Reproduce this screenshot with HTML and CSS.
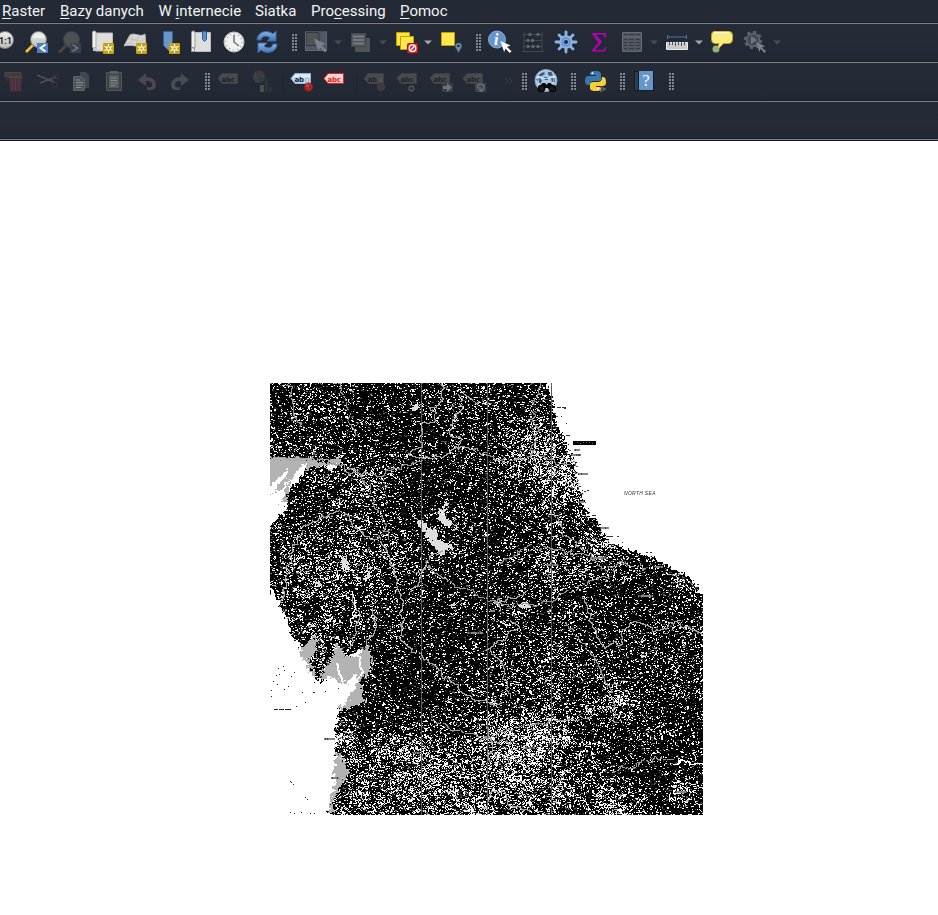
FILE: index.html
```html
<!DOCTYPE html>
<html lang="pl">
<head>
<meta charset="utf-8">
<title>QGIS</title>
<link rel="stylesheet" href="styles.css">
</head>
<body>
<svg class="defs" aria-hidden="true">
  <defs>
    <linearGradient id="lens" x1="0" y1="0" x2="0" y2="1"><stop offset="0" stop-color="#f0f0ee"/><stop offset="1" stop-color="#b9bbb8"/></linearGradient>
    <linearGradient id="blue" x1="0" y1="0" x2="0" y2="1"><stop offset="0" stop-color="#8db7e5"/><stop offset="1" stop-color="#3f73b5"/></linearGradient>
    <symbol id="star" viewBox="0 0 11 11"><rect width="11" height="11" rx="1" fill="#c6a00b"/><path d="M5.500 1v9M1.500 3.200l8 4.600M9.500 3.200l-8 4.600" stroke="#fff" stroke-width="1.100"/><circle cx="5.500" cy="5.500" r="2.300" fill="#fff"/><circle cx="5.500" cy="5.500" r="1.200" fill="#c6a00b"/></symbol>
    <symbol id="grip" viewBox="0 0 6 24"><path d="M2 4v17M5 4v17" stroke="#858890" stroke-width="2" stroke-dasharray="2 1"/></symbol>
    <symbol id="drop" viewBox="0 0 8 24"><path d="M0 10.500h8L4 14.500z" fill="currentColor"/></symbol>
    <symbol id="tag" viewBox="0 0 24 24"><path d="M1 9.500 5 4.500h15.500v10H5z" fill="#494b4d" stroke="#3c3f44"/></symbol>
    <symbol id="cursor" viewBox="0 0 12 13"><path d="M0 0l11 5-4 1.500 5 4.500-2 2-4.500-5L4 12z" fill="currentColor"/></symbol>
  </defs>
</svg>

<nav class="menu">
  <span><u>R</u>aster</span><span><u>B</u>azy danych</span><span>W <u>i</u>nternecie</span><span>Siatka</span><span>Pro<u>c</u>essing</span><span><u>P</u>omoc</span>
</nav>

<div class="bar bar-main">
  <svg class="icon" viewBox="0 0 24 24"><circle cx="5" cy="10" r="8.500" fill="url(#lens)" stroke="#777"/><text x="-1" y="13.500" class="ratio">1:1</text></svg>
  <svg class="icon" viewBox="0 0 24 24"><path d="M1 22.500 9 14.500" stroke="#342b20" stroke-width="4"/><path d="M1 22 8 15" stroke="#f3c13a" stroke-width="2.500"/><circle cx="13.500" cy="9.500" r="8" fill="url(#lens)" stroke="#777"/><path d="M7 8a7 5.500 0 0 1 13 0z" fill="#fff" opacity=".5"/><rect x="12" y="13" width="11" height="10" fill="#4b80bd"/><path d="m20.500 14.500-5 3.500 5 3.500" fill="none" stroke="#fff" stroke-width="2"/></svg>
  <svg class="icon" viewBox="0 0 24 24"><path d="M1 22.500 9 14.500" stroke="#494642" stroke-width="3"/><circle cx="13.500" cy="9.500" r="8" fill="#4c5055" stroke="#3d4147"/><rect x="12" y="13" width="11" height="10" fill="#374353"/><path d="m14.500 14.500 5 3.500-5 3.500" fill="none" stroke="#777d85" stroke-width="1.500"/></svg>
  <svg class="icon" viewBox="0 0 24 24"><path d="M4.500 3h17v18h-17z" fill="#dedfdd" stroke="#bbb"/><path d="M1.500 2.500c0-2 3.500-2 3.500 0v15H1.500z" fill="#f0f0ef" stroke="#aaa"/><path d="M2 17.500h4V21H2z" fill="#c4c5c4"/><use href="#star" x="12" y="13" width="11" height="11"/></svg>
  <svg class="icon" viewBox="0 0 24 24"><path d="M6 5c5-3 10 3 15-1l1 12c-7 3-14-3-22 0z" fill="#dadbd8" stroke="#bbb"/><path d="M3 10c7-3 12 3 19-1M2 14c6-3 14 3 20-1M9 5 5 16M14 6l-2 11M18 7l1 10M5 7l15 8M3 14 16 7" stroke="#bbb" fill="none" stroke-width=".6"/><use href="#star" x="12" y="13" width="11" height="11"/></svg>
  <svg class="icon" viewBox="0 0 24 24"><path d="M6.500 1.500h9v16l-4 3-5-5z" fill="#6796c9" stroke="#37628f"/><use href="#star" x="12" y="13" width="11" height="11"/></svg>
  <svg class="icon" viewBox="0 0 24 24"><path d="M4.500 2.500h16v19h-16z" fill="#dededc" stroke="#bbb"/><path d="M1.500 2.500c0-2 3.500-2 3.500 0v15H1.500zM1.500 18h3v3.500h-3z" fill="#eee" stroke="#999"/><path d="M12.500 1.500h4v8l-2 2-2-2z" fill="#5b92d0" stroke="#28609a"/></svg>
  <svg class="icon" viewBox="0 0 24 24"><circle cx="12" cy="12" r="10" fill="#f1f2ed" stroke="#b9c3c9"/><circle cx="12" cy="12" r="8" fill="none" stroke="#8199aa" stroke-width="1.200" stroke-dasharray="1 3.190"/><path d="M12 5v7l5 4" fill="none" stroke="#68727b" stroke-width="1.500"/></svg>
  <svg class="icon" viewBox="0 0 24 24"><path d="M2 10C2 2 12-1 18 4l3-3v10h-9l3-3C11 5 7 6 6 10z" fill="url(#blue)" stroke="#3c6aa4"/><path d="M22 14c0 8-10 11-16 6l-3 3V13h9l-3 3c4 3 8 2 9-2z" fill="url(#blue)" stroke="#3c6aa4"/></svg>
  <svg class="grip"><use href="#grip"/></svg>
  <svg class="icon" viewBox="0 0 24 24"><path d="M2 2h22v19H2z" fill="#505865"/><path d="M3 2.500h13v13H3z" fill="#505453" stroke="#35393e"/><path d="M2.500 1.500h21v19h-21z" fill="none" stroke="#727782" stroke-dasharray="1 1"/><g class="pale"><use href="#cursor" x="11" y="8" width="13" height="15"/></g></svg>
  <svg class="drop off"><use href="#drop"/></svg>
  <svg class="icon" viewBox="0 0 24 24"><path d="M5 8h15v14H5z" fill="#515550"/><path d="M1.500 3.500h14v13h-14z" fill="#53585f" stroke="#43484f"/><path d="M3 6.500h11M3 10h11M3 13.500h11" stroke="#7b8087" stroke-width="1.500"/></svg>
  <svg class="drop off"><use href="#drop"/></svg>
  <svg class="icon" viewBox="0 0 24 24"><path d="M2.500 2.500h13v13h-13z" fill="#fee740" stroke="#c79d06"/><path d="M6.500 6.500h13v13h-13z" fill="#fee94c" stroke="#c79d06"/><rect x="13.500" y="13.500" width="10" height="9.500" rx="1" fill="#d82d31" stroke="#b20d14"/><circle cx="18.500" cy="18.200" r="3.300" fill="none" stroke="#fff" stroke-width="1.300"/><path d="m16.500 20.200 4-4" stroke="#fff" stroke-width="1.300"/></svg>
  <svg class="drop on"><use href="#drop"/></svg>
  <svg class="icon" viewBox="0 0 24 24"><path d="M1.500 2.500h13v13h-13z" fill="#fee94c" stroke="#c79d06"/><path d="M18.500 22.500c-1-3-3-4-3-6.500a3 3 0 0 1 6 0c0 2.500-2 3.500-3 6.500z" fill="#6f95ad" stroke="#486b84"/><circle cx="18.500" cy="16" r="1.300" fill="#222936"/></svg>
  <svg class="grip"><use href="#grip"/></svg>
  <svg class="icon" viewBox="0 0 24 24"><circle cx="9" cy="9.500" r="8.500" fill="#6494cb" stroke="#8aaed9"/><text x="6" y="15" class="info">i</text><g class="white"><use href="#cursor" x="12" y="11" width="12" height="12"/></g></svg>
  <svg class="icon" viewBox="0 0 24 24"><path d="M3 2v19M21 2v19M2 4.500h20M2 10.500h20M2 16.500h20M1 21.500h22" stroke="#42464e"/><g fill="#62656c"><circle cx="9" cy="4.500" r="1.700"/><circle cx="17" cy="4.500" r="1.700"/><circle cx="7" cy="10.500" r="1.700"/><circle cx="11.500" cy="10.500" r="1.700"/><circle cx="7" cy="16.500" r="1.700"/><circle cx="12" cy="16.500" r="1.700"/><circle cx="17" cy="16.500" r="1.700"/></g></svg>
  <svg class="icon" viewBox="0 0 24 24"><path d="M12 2v20M2 12h20M5 5l14 14M19 5 5 19" stroke="#8bb5e8" stroke-width="2.800" stroke-linecap="round"/><circle cx="12" cy="12" r="6" fill="#7da8dc" stroke="#8bb5e8" stroke-width="1.500"/><circle cx="12" cy="12" r="4" fill="none" stroke="#5c89c1"/><circle cx="12" cy="12" r="2" fill="#222b38"/></svg>
  <svg class="icon" viewBox="0 0 24 24"><path d="M5 3h14v5h-1l-2-3.500H9l6 7.500-7 8h8.500l2-3.500h1L18 21.500H5V20l6.500-7.500L5 4z" fill="#b500af"/></svg>
  <svg class="icon" viewBox="0 0 24 24"><path d="M2.500 2.500h19v19h-19z" fill="#505560" stroke="#656a75"/><path d="M4 4.500h3M9 4.500h5M16 4.500h4M4 9.500h3M9 9.500h5M16 9.500h4M4 12.500h3M9 12.500h5M16 12.500h4M4 15.500h3M9 15.500h5M16 15.500h4M4 18.500h3M9 18.500h5M16 18.500h4" stroke="#343945"/><path d="M3 7h18" stroke="#6c717a"/></svg>
  <svg class="drop off"><use href="#drop"/></svg>
  <svg class="icon" viewBox="0 0 24 24"><path d="M2.500 5v4M21.500 5v4M2 7h20" stroke="#4f78a4"/><path d="M1.500 12.500h21v7h-21z" fill="#cbc9ca" stroke="#eeeced"/><path d="M4.500 12v3M7.500 12v3M10.500 12v4M13.500 12v3M16.500 12v4M19.500 12v3" stroke="#555"/></svg>
  <svg class="drop on"><use href="#drop"/></svg>
  <svg class="icon" viewBox="0 0 24 24"><circle cx="6" cy="19" r="3.500" fill="#85b78a"/><path d="M4 1.500h15q3.500 0 3.500 4v4q0 4-4 4h-5L7 20l2-6.500H5q-3.500 0-3.500-4v-4q0-4 2.500-4z" fill="#fbec81" stroke="#c8a313"/><path d="M4 2.500h15" stroke="#fffbd8" stroke-width="1.500"/></svg>
  <svg class="icon" viewBox="0 0 24 24"><circle cx="10" cy="10" r="8" fill="none" stroke="#5b606a" stroke-width="2.500" stroke-dasharray="3.200 3.080"/><circle cx="10" cy="10" r="6.500" fill="#434852" stroke="#626771" stroke-width="1.500"/><path d="m8 6 6 4-6 4z" fill="#717680"/><g class="pale"><use href="#cursor" x="13" y="12" width="10" height="11"/></g></svg>
  <svg class="drop off"><use href="#drop"/></svg>
</div>

<div class="bar bar-edit">
  <svg class="icon" viewBox="0 0 24 24"><path d="M3 3.500h16v4H3z" fill="#3c3e3d" stroke="#484846"/><path d="M5 12V5.500h15" fill="none" stroke="#4d343c"/><path d="M7 9h13l-1 13.500H8z" fill="#49313a"/><path d="M6 8.500h15M10 10v11M13.500 10v11M17 10v11" stroke="#5d3c46"/></svg>
  <svg class="icon" viewBox="0 0 24 24"><path d="M0 6 17 13M3 14l16-6" stroke="#4c5057" stroke-width="1.800"/><ellipse cx="19" cy="7.500" rx="3" ry="2" fill="none" stroke="#423138"/><ellipse cx="18" cy="16" rx="2.200" ry="3" fill="none" stroke="#423138"/></svg>
  <svg class="icon" viewBox="0 0 24 24"><path d="M10 3h6l3 3v13h-9z" fill="#43484f"/><path d="M3.500 7.500h8l3 3v11h-11z" fill="#50555b" stroke="#5e6368"/><path d="M6 11h4M6 13.500h7M6 16h7M6 18.500h5" stroke="#898d90"/></svg>
  <svg class="icon" viewBox="0 0 24 24"><path d="M3.500 3.500h15v18h-15z" fill="#3d4146" stroke="#555959"/><path d="M6 6h10v13H6z" fill="#575c61"/><path d="M7 2h8v3H7z" fill="#5c6062"/><path d="M7.500 9h6M7.500 11.500h7M7.500 14h7M7.500 16.500h5" stroke="#84878a"/></svg>
  <svg class="icon" viewBox="0 0 24 24"><path d="m2 11 8-7v4c7 0 10 4 10 8 0 3-2 5-6 5h-3v-3c3 1 5 0 5-2 0-3-2-4-6-4v5z" fill="#4e474d"/></svg>
  <svg class="icon" viewBox="0 0 24 24"><path d="m20 11-8-7v4C5 8 2 12 2 16c0 3 2 5 6 5h3v-3c-3 1-5 0-5-2 0-3 2-4 6-4v5z" fill="#434f54"/></svg>
  <svg class="grip"><use href="#grip"/></svg>
  <svg class="icon" viewBox="0 0 24 24"><use href="#tag"/><text x="4.500" y="12.500" class="label">abc</text></svg>
  <svg class="icon" viewBox="0 0 24 24"><circle cx="9" cy="8" r="6" fill="#3a4243"/><path d="M9 8 4 4a6 6 0 0 1 10 0z" fill="#42383e"/><path d="M9 8v6a6 6 0 0 0 6-6z" fill="#2a3e3c"/><path d="M10 16h4v7h-4z" fill="#4d4e4c"/><path d="M15 11h2.500v12H15z" fill="#293b39"/><path d="M19 18h2.500v5H19z" fill="#3e3036"/></svg>
  <i class="sep"></i>
  <svg class="icon" viewBox="0 0 24 24"><path d="M1 9.500 5 4.500h15.500v10H5z" fill="#bdd8f8" stroke="#8db8ea"/><path d="M5 5.500h15v3H3z" fill="#eef6ff" opacity=".7"/><text x="4.500" y="12.500" class="label">ab</text><path d="M16 15V9.500q1.500-2 2.500 0v6" fill="#ddd" stroke="#999" stroke-width=".7"/><circle cx="18.500" cy="18" r="4.400" fill="#a82628"/><circle cx="17.500" cy="16.500" r="1.500" fill="#cc4a47"/></svg>
  <svg class="icon" viewBox="0 0 24 24"><path d="M1 9.500 5 4.500h15.500v10H5z" fill="#fbd5d5" stroke="#f11b1e"/><text x="4.500" y="12.500" class="label red">abc</text></svg>
  <i class="sep"></i>
  <svg class="icon" viewBox="0 0 24 24"><use href="#tag"/><text x="4.500" y="12.500" class="label">ab</text><path d="M16.500 15V9.500h2v6" fill="#555"/><circle cx="18" cy="18" r="4.400" fill="#40393f"/></svg>
  <svg class="icon" viewBox="0 0 24 24"><use href="#tag"/><text x="4.500" y="12.500" class="label">abc</text><circle cx="15.500" cy="19.500" r="2.300" fill="#252c37" stroke="#4e535b" stroke-width="1.700"/></svg>
  <svg class="icon" viewBox="0 0 24 24"><use href="#tag"/><text x="4.500" y="12.500" class="label">abc</text><path d="M13 14h11v9H13z" fill="#393f4a"/><path d="M14 17h4v-3l5 4.500-5 4.500v-3h-4z" fill="#6f7379"/></svg>
  <svg class="icon" viewBox="0 0 24 24"><use href="#tag"/><text x="4.500" y="12.500" class="label">abc</text><path d="M13 14h11v9H13z" fill="#3d424c"/><path d="M16 20c-3-6 6-6 6-2 0 2-2 3-4 3M18 18v4h3" fill="none" stroke="#696d74" stroke-width="1.600"/></svg>
  <svg class="icon" viewBox="0 0 24 24"><path d="m3 9 3 3-3 3M7 9l3 3-3 3" fill="none" stroke="#383d47"/></svg>
  <svg class="grip"><use href="#grip"/></svg>
  <svg class="icon" viewBox="0 0 24 24"><circle cx="12" cy="11.500" r="11" fill="#a9c6e3" stroke="#8ba6c0"/><path d="M5 5l5-2 1 2-3 2-4 0zM14 3h4l2 3-4 1-2-1zM2 10l4-1 2 3-2 3zM17 9l4 0 0 4-3 0zM10 8l3 0 1 3-3 0z" fill="#365f87"/><path d="M2 8q10 3 20 0M6 3q-4 7 0 14M18 3q4 7 0 12" fill="none" stroke="#e3eef7" stroke-width=".8"/><path d="M8.500 14h2.500l1.500 2 1.500-2h2.500l6 6-6 2-3-3h-2l-3 3-5-2z" fill="#050505"/><circle cx="7.500" cy="19.500" r="3.200" fill="#151a1d" stroke="#050505" stroke-width="1.200"/><circle cx="18.500" cy="19.500" r="3.200" fill="#151a1d" stroke="#050505" stroke-width="1.200"/></svg>
  <svg class="grip"><use href="#grip"/></svg>
  <svg class="icon" viewBox="0 0 24 24"><path d="M11 2c5 0 6 1 6 4v4q0 2-3 2H9q-3 0-3 4H4c-2 0-3-2-3-4 0-3 1-5 4-5h7V6H6V4c0-1.500 2-2 5-2z" fill="#3978ad"/><path d="M12 22c-5 0-6-1-6-4v-2q0-3 3-3h5q4 0 4-5c3 0 4 1 4 5 0 3-1 4-4 4h-6v1h5v2c0 1.500-2 2-5 2z" fill="#f8cf39"/><circle cx="8.500" cy="4.200" r="1" fill="#fff"/><circle cx="14" cy="19.500" r="1" fill="#fff"/><path d="m16 18 5 2-5 2.500" fill="none" stroke="#666865" stroke-width="1.500"/></svg>
  <svg class="grip"><use href="#grip"/></svg>
  <svg class="icon" viewBox="0 0 24 24"><path d="M1 2h20v20H1z" fill="#171c23"/><path d="M2 3h3v18H2z" fill="#2c414f"/><path d="M6 2h14v19H6z" fill="#6597cc"/><text x="9.500" y="17" class="help">?</text></svg>
  <svg class="grip"><use href="#grip"/></svg>
</div>
<div class="bar bar-empty"></div>

<main class="view">
  <div class="map">
    <canvas id="map" width="433" height="432"></canvas>
    <span class="sea">NORTH SEA</span>
  </div>
</main>
<script src="map.js"></script>
</body>
</html>
```

FILE: styles.css
```css
body { margin: 0; height: 915px; overflow: hidden; display: flex; flex-direction: column; background: #fff; font-family: Roboto, sans-serif; }
.defs { position: absolute; width: 0; height: 0; }
.menu { box-sizing: border-box; height: 24px; flex: none; display: grid; grid-template-columns: 58px 98.500px 96.500px 56px 89px auto; padding-left: 2px; background: #232a35; border-bottom: 1px solid #7b7f87; box-shadow: inset 0 -1px #1a1e27; color: #f4f5f6; font-size: 15px; line-height: 22px; white-space: nowrap; }
.menu u { text-decoration-thickness: 1px; text-underline-offset: 2px; text-decoration-skip-ink: none; }
.bar { box-sizing: border-box; height: 39px; flex: none; display: grid; align-content: start; padding-top: 6px; background: linear-gradient(#252c38, #222833); border-bottom: 1px solid #7b7f87; box-shadow: inset 0 -1px #1a1e27; }
.bar-main { grid-template-columns: 25px 33px 33px 33px 33px 33px 32px 33px 36px 12px 31px 16px 29px 15px 30px 16px 35px 13px 33px 33px 33px 33px 30px 15px 30px 15px 33px 30px 8px; }
.bar-edit { grid-template-columns: 35px 33px 33px 33px 33px 35px 13px 33px 33px 7px 33px 33px 7px 33px 33px 33px 40px 19px 13px 36px 14px 35px 14px 35px 10px; padding-left: 2px; }
.bar-empty { height: 38px; }
.icon { width: 24px; height: 24px; display: block; }
.grip { width: 6px; height: 24px; display: block; }
.drop { width: 8px; height: 24px; display: block; }
.drop.off { color: #494e58; }
.pale { color: #7c818b; }
.on { color: #a4a6aa; }
.white { color: #fff; }
.sep { width: 1px; height: 18px; margin-top: 4px; background: #1e242d; }
.ratio { font: bold 9px Roboto, sans-serif; fill: #222; }
.info { font: italic bold 16px "Liberation Serif", serif; fill: #fff; }
.label { font: bold 7px "DejaVu Sans", sans-serif; letter-spacing: -.2px; fill: #20242b; }
.red { fill: #e51c20; }
.help { font: 16px "Liberation Serif", serif; fill: #fff; }
.view { flex: 1; border-top: 1px solid #15181e; background: #fff; }
.map { position: relative; width: 433px; height: 432px; margin: 242px 0 0 270px; }
.map canvas { display: block; }
.sea { position: absolute; left: 354px; top: 106px; font: italic 5px/9px "Liberation Sans", sans-serif; letter-spacing: .3px; color: #333; white-space: nowrap; }
```

FILE: map.js
```js
const ctx = document.getElementById('map').getContext('2d');
const W = 433, H = 432, OX = 270, OY = 383;
let seed = 7919;
const rnd = () => {
  seed = (seed + 0x6D2B79F5) | 0;
  let t = Math.imul(seed ^ (seed >>> 15), 1 | seed);
  t = (t + Math.imul(t ^ (t >>> 7), 61 | t)) ^ t;
  return ((t ^ (t >>> 14)) >>> 0) / 4294967296;
};
const px = (x, y, c, w = 1, h = 1) => { ctx.fillStyle = c; ctx.fillRect(Math.round(x) - OX, Math.round(y) - OY, w, h); };

// Smooth value noise, used to fray coasts and to clump the speckle.
const grid = Array.from({ length: 400 * 400 }, rnd);
const noise = (x, y, s) => {
  const u = x / s, v = y / s, i = Math.floor(u), j = Math.floor(v), f = u - i, g = v - j;
  const at = (a, b) => grid[(b % 400) * 400 + (a % 400)];
  return (at(i, j) * (1-f) + at(i+1, j) * f) * (1-g) + (at(i, j+1) * (1-f) + at(i+1, j+1) * f) * g;
};

// Even-odd containment test for [x, y] rings.
const inside = (p, x, y) => {
  let r = false;
  for (let i = 0, j = p.length - 1; i < p.length; j = i++) {
    const [a, b] = p[i], [c, d] = p[j];
    if ((b > y) !== (d > y) && x < (c - a) * (y - b) / (d - b) + a) r = !r;
  }
  return r;
};
const frayed = (p, x, y, j) => inside(p, x + (noise(x, y, 2) - .5) * j, y + (noise(y, x, 2) - .5) * j);
const area = (p, c, j = 6) => {
  for (let y = OY; y < OY + H; y++) for (let x = OX; x < OX + W; x++)
    if (frayed(p, x, y, j)) px(x, y, c);
};

const land = [[264,376],[546,376],[546,382],[549,392],[552,402],[554,412],[556,422],[561,432],[566,442],[571,452],[575,462],[576,474],[579,488],[583,502],[587,512],[596,520],[602,530],[609,540],[618,546],[628,550],[643,553],[656,559],[668,566],[678,572],[690,577],[697,588],[704,598],[709,598],[709,822],[334,822],[334,816],[328,812],[329,803],[335,785],[337,770],[335,755],[335,735],[337,710],[352,706],[365,702],[361,688],[357,682],[364,672],[372,663],[368,650],[360,648],[348,657],[338,654],[331,668],[322,682],[315,681],[308,667],[304,655],[297,643],[292,635],[288,624],[283,611],[277,598],[270,588],[264,586],[264,530],[269,528],[277,518],[286,510],[286,498],[290,487],[300,478],[292,470],[264,466]];
const hot = [[535,455,24,.2],[570,475,14,.25],[555,500,25,.1],[600,550,14,.25],[548,565,14,.15],[520,740,17,.24],[553,735,14,.28],[510,782,26,.15],[550,785,25,.12],[615,702,10,.32],[385,748,10,.3],[415,755,14,.2],[460,795,32,.2],[380,800,32,.15],[620,808,18,.22],[680,792,9,.25],[365,485,14,.15],[345,565,22,.14],[320,640,22,.1],[345,735,8,.35],[560,690,25,.07],[675,640,24,.05],[300,570,22,.08],[400,555,25,.04],[680,580,10,.22],[300,435,25,.04],[500,720,20,.08],[370,480,30,.05]];
const calm = [[400,425,28,.06],[405,500,25,.06],[510,515,20,.05],[650,590,30,.05],[410,690,30,.06],[650,790,22,.1],[500,800,12,.15],[440,620,40,.03]];
const sum = (a, x, y) => a.reduce((s, [u, v, r, k]) => s + k * Math.exp(-((x-u)**2 + (y-v)**2) / (2*r*r)), 0);

area(land, '#000');
for (let y = OY; y < OY + H; y++) for (let x = OX; x < OX + W; x++) {
  if (!frayed(land, x, y, 6)) continue;
  const clump = (.4 + 1.2 * noise(x, y, 6)) * (.5 + noise(y, x, 2.3));
  const d = Math.max(.04, .135 + sum(hot, x, y) - sum(calm, x, y)) * clump, r = rnd();
  if (r < d * .72) px(x, y, '#fff', rnd() < .3 ? 2 : 1, rnd() < .12 ? 2 : 1);
  else if (r < d) px(x, y, rnd() < .5 ? '#777' : '#c5c5c5', rnd() < .3 ? 2 : 1);
  else if (r < d + .065) px(x, y, rnd() < .7 ? '#292929' : '#555', rnd() < .4 ? 2 : 1);
}

// Tidal flats along the western coast.
[
  [[264,457],[310,458],[325,462],[335,457],[341,457],[334,467],[319,464],[302,471],[290,480],[286,500],[280,504],[284,489],[290,478],[278,490],[264,493]],
  [[300,645],[313,639],[316,630],[317,648],[308,658],[316,680],[311,674],[299,650]],
  [[331,657],[338,642],[345,657],[358,657],[367,646],[372,658],[371,668],[364,675],[359,681],[365,701],[352,706],[336,710],[348,699],[358,681],[353,673],[345,683],[339,682],[331,676],[319,678]],
  [[336,750],[346,763],[347,775],[341,784],[335,794],[331,805],[335,814],[327,809],[334,785],[334,772]]
].forEach(p => area(p, '#b3b3b3'));
[[[264,491],[277,479],[289,467],[286,474],[272,492]],[[303,463],[307,463],[303,473],[290,481],[296,471]],[[325,466],[337,463],[336,467],[327,468]]].forEach(p => area(p, '#fff', 3));

// Inland water.
[
  [[408,512],[415,519],[424,520],[430,529],[438,531],[438,539],[446,543],[455,542],[452,548],[444,549],[440,555],[436,550],[430,542],[423,532],[416,523]],
  [[443,502],[448,502],[443,514],[451,521],[461,527],[455,525],[440,524],[438,514]],
  [[467,524],[474,526],[472,531],[468,529]],
  [[343,552],[348,566],[346,573],[342,564]],[[367,564],[372,576],[365,577]],[[313,583],[322,581],[324,587],[315,585]],
  [[409,401],[418,407],[423,410],[414,410]],[[450,603],[457,606],[451,607]],[[521,603],[530,603],[528,608],[522,608]]
].forEach(p => area(p, '#dedede', 6));

// Draws a connected, wandering river or road through its control points.
const line = (pts, c, rough = 1.4, thick = 1, keep = .94) => {
  let lx = null, ly = null;
  for (let i = 1; i < pts.length; i++) {
    const [a, b] = pts[i-1], [u, v] = pts[i], n = Math.ceil(Math.hypot(u-a, v-b));
    for (let k = 0; k <= n; k++) {
      const x0 = a + (u-a)*k/n, y0 = b + (v-b)*k/n;
      const x = Math.round(x0 + (noise(x0, y0, 3.5) - .5) * rough * 4), y = Math.round(y0 + (noise(y0, x0, 3.5) - .5) * rough * 4);
      if (rnd() < keep) {
        px(x, y, c, thick, 1);
        if (lx !== null && lx !== x) px(Math.min(lx, x), y, c, Math.abs(lx - x) + 1, 1);
        if (ly !== null && ly !== y) px(lx, Math.min(ly, y), c, 1, Math.abs(ly - y) + 1);
      }
      lx = x; ly = y;
    }
  }
};
[421, 487, 551].forEach(x => { for (let y = OY; y < 815; y++) if (inside(land, x, y) || y < 404) px(x, y, rnd() < .8 ? '#555' : '#888'); });
[
  [[441,383],[443,398],[431,409],[436,419],[422,425],[419,436],[420,446],[408,455],[423,458],[445,454],[458,446],[474,448],[485,455]],
  [[459,392],[462,407],[452,418],[449,436],[461,439],[455,447]],
  [[462,390],[469,397],[480,402]],
  [[270,458],[310,459],[340,464]],
  [[402,600],[400,641],[415,652],[436,667],[448,680],[463,692],[481,702],[500,704]],
  [[300,528],[322,516],[342,511],[350,518],[352,528],[370,538],[381,539],[391,558],[396,581],[402,600]],
  [[301,530],[290,555],[284,583],[282,600]],
  [[490,650],[502,664],[505,682],[511,697]],[[487,648],[512,632],[520,627],[508,620]],
  [[582,597],[591,625],[601,646],[620,643],[625,626],[641,621],[657,631],[674,621],[692,630],[703,633]],
  [[498,610],[494,600],[512,598],[525,593]],
  [[487,726],[492,740],[487,760]],[[487,800],[492,792],[506,792],[510,806],[528,810]],
  [[352,595],[358,615],[350,650]],[[374,607],[376,625],[368,640],[365,648]]
].forEach(p => line(p, '#a9a9a9', 1.5));
[
  [[340,464],[360,475],[370,485],[371,499],[381,519],[390,541]],
  [[415,572],[430,567],[455,585],[480,595],[510,605],[545,603],[570,590],[610,575]],
  [[610,770],[635,765],[655,758],[674,762]],
  [[480,742],[508,728],[550,720],[590,718]],
  [[485,456],[505,462],[535,455],[569,465]],[[551,510],[565,535],[586,551],[605,570],[625,560],[645,570]],
  [[540,383],[530,410],[538,430],[530,455]],[[340,383],[348,410],[354,435]],[[288,383],[292,400],[300,428]],
  [[500,560],[530,545],[550,548],[585,556]],[[560,620],[590,650],[610,690],[615,720]],[[430,720],[470,735],[510,742]]
].forEach(p => line(p, '#999', 1.8, 1, .7));
line([[330,463],[342,464],[350,473],[378,475],[400,467],[421,460]], '#999');
line([[353,590],[355,604],[350,624]], '#fff', 1, 1);
line([[359,658],[362,671],[355,682]], '#fff', 1, 2);
line([[337,663],[341,677],[340,685]], '#fff', 1, 2);
line([[673,765],[682,760],[690,764],[703,764]], '#fff', .8, 2);
line([[443,550],[425,560],[420,580],[406,594]], '#aaa', 1.5, 1, .8);

// Place-name marks.
[[574,449,6],[571,454,10],[578,473,10],[600,527,9],[590,557,17],[546,564,13],[638,595,15],[467,632,16],[324,738,11],[331,777,8],[578,501,6],[656,566,7],[490,610,5],[525,747,10],[413,752,7],[675,791,12]].forEach(([x,y,w]) => {
  for (let i = 0; i < w; i++) px(x+i, y, rnd() < .8 ? '#888' : '#444', 1, 2);
});
px(573,441,'#000',23,4);
for (let i = 577; i < 594; i += 3) px(i, 442 + Math.round(rnd()), '#777');

// Coastal fragments and offshore soundings.
const dots = (list, c) => list.forEach(([x,y,w=1,h=1]) => px(x,y,c,w,h));
dots([[557,407,4],[562,407,4],[564,408,2],[552,400,2],[561,416],[558,435,6],[566,435,4],[566,423],[587,490,2],[585,502],[584,491,2],[592,515,4],[607,536,6],[617,536,2],[622,542],[646,552,2],[650,552,2],[693,580],[697,584,2]], '#333');
dots([[283,666],[284,670],[278,668],[276,675],[279,674],[273,681],[277,684],[271,690],[271,696],[284,689],[288,686],[291,676],[294,672],[302,692],[313,692,2],[305,702],[296,706],[325,691],[338,688],[274,709,4],[279,709,5],[285,709,6],[290,781],[291,782],[293,784],[305,797],[307,799],[290,812],[294,813],[301,812],[310,813],[314,813]], '#222');
```
